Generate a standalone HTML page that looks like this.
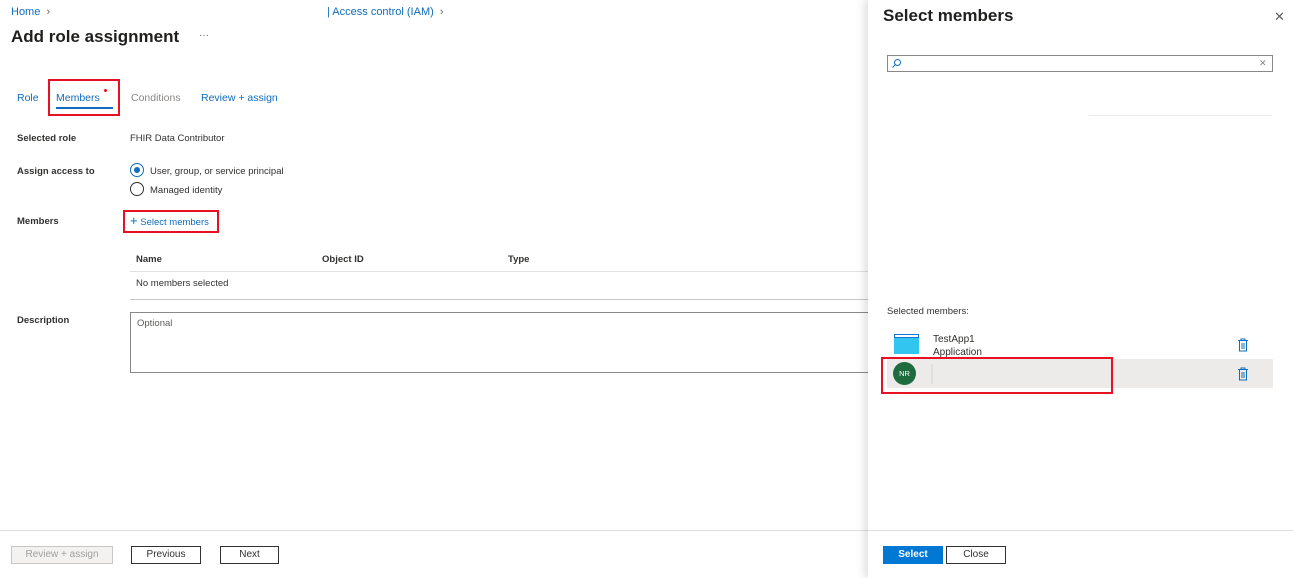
<!DOCTYPE html>
<html><head><meta charset="utf-8"><style>
*{margin:0;padding:0;box-sizing:border-box}
body{width:1293px;height:578px;position:relative;overflow:hidden;background:#fff;font-family:"Liberation Sans",Arial,sans-serif;color:#323130;font-size:11px}
.a{position:absolute;white-space:nowrap}
.blue{color:#0f6cbd}
.b{font-weight:bold}
.red{position:absolute;border:2px solid #e81123}
.btn{position:absolute;border:1px solid #323130;background:#fff;text-align:center;font-size:10px;line-height:16px;color:#323130}
.s{font-size:9.5px}
</style></head><body>
<div class="a blue" style="left:11px;top:6px">Home&nbsp;&nbsp;<span style="color:#666">›</span></div>
<div class="a blue" style="left:327px;top:6px">| Access control (IAM)&nbsp;&nbsp;<span style="color:#666">›</span></div>
<div class="a" style="left:11px;top:27px;font-size:17px;font-weight:bold;color:#201f1e">Add role assignment</div>
<div class="a" style="left:199px;top:30px;color:#555;font-size:10px">···</div>

<div class="a blue" style="left:17px;top:92px;font-size:10.5px">Role</div>
<div class="a blue" style="left:56px;top:92px;font-size:10.5px">Members</div>
<div class="a" style="left:104px;top:89px;width:3px;height:3px;border-radius:50%;background:#e81123"></div>
<div class="a" style="left:56px;top:107px;width:57px;height:2px;background:#0f6cbd"></div>
<div class="red" style="left:48px;top:79px;width:72px;height:37px"></div>
<div class="a" style="left:131px;top:92px;color:#8a8886;font-size:10.5px">Conditions</div>
<div class="a blue" style="left:201px;top:92px;font-size:10.5px">Review + assign</div>

<div class="a b s" style="left:17px;top:133px">Selected role</div>
<div class="a s" style="left:130px;top:133px">FHIR Data Contributor</div>
<div class="a b s" style="left:17px;top:166px">Assign access to</div>
<div class="a" style="left:130px;top:163px;width:14px;height:14px;border:1px solid #0f6cbd;border-radius:50%"></div>
<div class="a" style="left:134px;top:167px;width:6px;height:6px;background:#0f6cbd;border-radius:50%"></div>
<div class="a s" style="left:150px;top:166px">User, group, or service principal</div>
<div class="a" style="left:130px;top:182px;width:14px;height:14px;border:1px solid #323130;border-radius:50%"></div>
<div class="a s" style="left:150px;top:185px">Managed identity</div>
<div class="a b s" style="left:17px;top:216px">Members</div>
<div class="a blue s" style="left:130px;top:213px"><span style="font-size:13px">+</span> Select members</div>
<div class="red" style="left:123px;top:210px;width:96px;height:23px"></div>

<div class="a b s" style="left:136px;top:254px">Name</div>
<div class="a b s" style="left:322px;top:254px">Object ID</div>
<div class="a b s" style="left:508px;top:254px">Type</div>
<div class="a" style="left:130px;top:271px;width:740px;height:1px;background:#e1dfdd"></div>
<div class="a s" style="left:136px;top:278px">No members selected</div>
<div class="a" style="left:130px;top:299px;width:740px;height:1px;background:#c8c6c4"></div>
<div class="a b s" style="left:17px;top:315px">Description</div>
<div class="a" style="left:130px;top:312px;width:745px;height:61px;border:1px solid #8a8886"></div>
<div class="a s" style="left:137px;top:318px;color:#605e5c">Optional</div>

<div class="a" style="left:0;top:530px;width:870px;height:1px;background:#e1dfdd"></div>
<div class="btn" style="left:11px;top:546px;width:102px;height:18px;border-color:#c8c6c4;background:#f3f2f1;color:#a19f9d">Review + assign</div>
<div class="btn" style="left:131px;top:546px;width:70px;height:18px">Previous</div>
<div class="btn" style="left:220px;top:546px;width:59px;height:18px">Next</div>

<!-- panel -->
<div class="a" style="left:868px;top:0;width:425px;height:578px;background:#fff;box-shadow:-4px 0 8px rgba(0,0,0,0.12)"></div>
<div class="a" style="left:883px;top:6px;font-size:17px;font-weight:bold;color:#201f1e">Select members</div>
<div class="a" style="left:1274px;top:9px;font-size:13px;color:#605e5c">✕</div>
<div class="a" style="left:887px;top:55px;width:386px;height:17px;border:1px solid #8a8886"></div>
<svg class="a" style="left:891px;top:58px" width="11" height="11" viewBox="0 0 11 11"><circle cx="6.5" cy="4.5" r="3" fill="none" stroke="#0f6cbd" stroke-width="1"/><path d="M4.3 6.7L1.5 9.5" stroke="#0f6cbd" stroke-width="1"/></svg>
<div class="a" style="left:1259px;top:58px;font-size:9px;color:#8a8886">✕</div>
<div class="a" style="left:1089px;top:115px;width:183px;height:1px;background:#edebe9"></div>

<div class="a s" style="left:887px;top:306px">Selected members:</div>
<div class="a" style="left:894px;top:334px;width:25px;height:20px;background:#32c5ef"></div>
<div class="a" style="left:894px;top:334px;width:25px;height:4px;background:#0f78d4"></div>
<div class="a" style="left:895px;top:335px;width:23px;height:2px;background:#fff"></div>
<div class="a" style="left:933px;top:334px;font-size:10px">TestApp1</div>
<div class="a" style="left:933px;top:347px;font-size:10px">Application</div>
<div class="a" style="left:887px;top:359px;width:386px;height:29px;background:#edebe9"></div>
<div class="a" style="left:893px;top:362px;width:23px;height:23px;border-radius:50%;background:#1e6b3f;color:#fff;font-size:7.5px;text-align:center;line-height:23px">NR</div>
<div class="a" style="left:931px;top:364px;width:2px;height:20px;background:#e1dfdd"></div>
<div class="red" style="left:881px;top:357px;width:232px;height:37px"></div>
<svg class="a" style="left:1237px;top:338px" width="12" height="14" viewBox="0 0 12 14"><path d="M1 2.5h10M4 2.5V1h4v1.5M2.5 2.5V13h7V2.5M5 5v6M7 5v6" fill="none" stroke="#0f6cbd" stroke-width="1"/></svg>
<svg class="a" style="left:1237px;top:367px" width="12" height="14" viewBox="0 0 12 14"><path d="M1 2.5h10M4 2.5V1h4v1.5M2.5 2.5V13h7V2.5M5 5v6M7 5v6" fill="none" stroke="#0f6cbd" stroke-width="1"/></svg>

<div class="a" style="left:868px;top:530px;width:425px;height:1px;background:#e1dfdd"></div>
<div class="btn" style="left:883px;top:546px;width:60px;height:18px;background:#0078d4;border-color:#0078d4;color:#fff;font-weight:bold">Select</div>
<div class="btn" style="left:946px;top:546px;width:60px;height:18px">Close</div>
</body></html>
